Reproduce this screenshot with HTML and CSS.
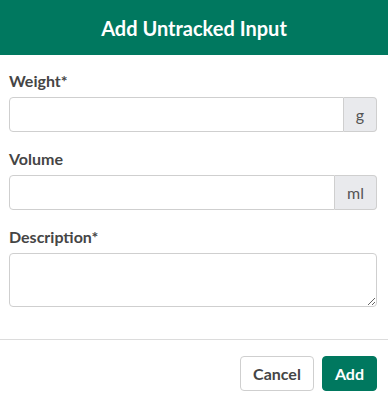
FILE: index.html
```html
<!DOCTYPE html>
<html lang="en">
<head>
    <meta charset="UTF-8">
    <meta name="viewport" content="width=device-width, initial-scale=1.0">
    <title>Add Untracked Input</title>
    <link rel="stylesheet" href="styles.css">
</head>
<body>

<div class="modal">
    <header class="modal-header">
        <h1>Add Untracked Input</h1>
    </header>

    <form class="modal-body">
        <div class="form-group">
            <label for="weight">Weight*</label>
            <div class="input-group">
                <input type="text" id="weight" class="form-control">
                <span class="addon">g</span>
            </div>
        </div>
        <div class="form-group">
            <label for="volume">Volume</label>
            <div class="input-group">
                <input type="text" id="volume" class="form-control">
                <span class="addon">ml</span>
            </div>
        </div>
        <div class="form-group">
            <label for="description">Description*</label>
            <textarea id="description" class="form-control textarea"></textarea>
        </div>
    </form>

    <footer class="modal-footer">
        <button class="btn btn-cancel">Cancel</button>
        <button class="btn btn-add">Add</button>
    </footer>
</div>

</body>
</html>
```

FILE: styles.css
```css
body {
    margin: 0;
    padding: 0;
    font-family: Lato, 'Open Sans', sans-serif;
    background: #fff;
    color: #454545;
}

.modal {
    width: 388px;
}

.modal-header {
    background: #00785f;
    height: 55px;
    display: flex;
    align-items: center;
    justify-content: center;
}

.modal-header h1 {
    margin: 0;
    color: #fff;
    font-size: 20px;
    font-weight: 700;
}

.modal-body {
    padding: 15px 11px 16px 9px;
    margin: 0;
}

.form-group {
    margin-bottom: 16px;
}

.form-group label {
    display: block;
    font-size: 16px;
    font-weight: 700;
    line-height: 22px;
    margin-bottom: 5px;
    color: #454545;
}

.input-group {
    display: flex;
    height: 35px;
}

.form-control {
    flex: 1;
    box-sizing: border-box;
    min-width: 0;
    border: 1px solid #cfcfcf;
    border-radius: 4px;
    padding: 6px 10px;
    font-family: inherit;
    font-size: 16px;
    color: #454545;
    outline: none;
}

.input-group .form-control {
    border-top-right-radius: 0;
    border-bottom-right-radius: 0;
}

.addon {
    display: flex;
    align-items: center;
    padding: 0 12px;
    background: #e9eaed;
    border: 1px solid #cfcfcf;
    border-left: none;
    border-radius: 0 4px 4px 0;
    color: #555;
    font-size: 16px;
}

.textarea {
    display: block;
    width: 100%;
    height: 54px;
    resize: vertical;
}

.modal-footer {
    border-top: 1px solid #dcdcdc;
    padding: 16px 11px 14px;
    display: flex;
    justify-content: flex-end;
    gap: 8px;
}

.btn {
    height: 35px;
    padding: 0 12px;
    border-radius: 4px;
    font-family: inherit;
    font-size: 16px;
    font-weight: 700;
    cursor: pointer;
}

.btn-cancel {
    background: #fff;
    color: #454545;
    border: 1px solid #cfcfcf;
}

.btn-add {
    background: #00785f;
    color: #fff;
    border: 1px solid #00785f;
}
```
